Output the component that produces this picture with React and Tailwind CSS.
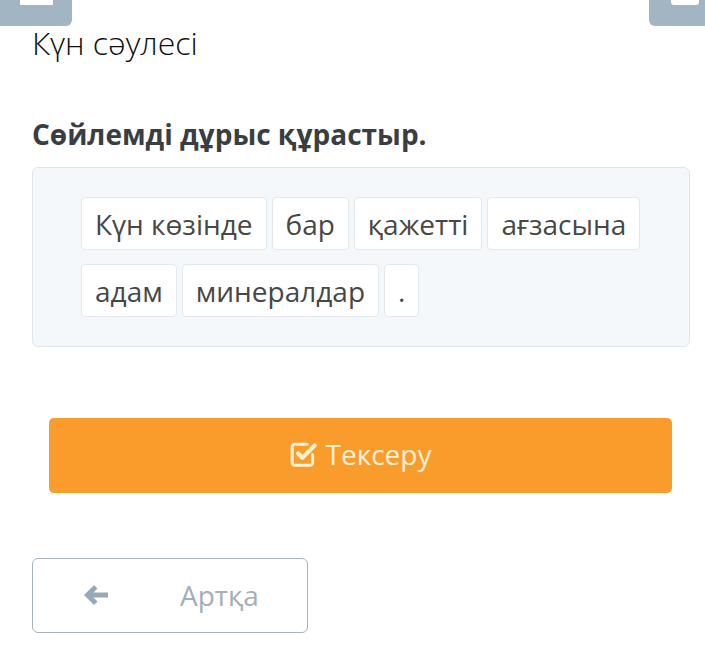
import { useState } from "react";

const words = [
    "Күн көзінде",
    "бар",
    "қажетті",
    "ағзасына",
    "адам",
    "минералдар",
    ".",
];

function CheckSquare() {
    return (
        <svg width="28" height="28" viewBox="0 0 26 26" fill="none">
            <path d="M21 13.5 V21 A2.5 2.5 0 0 1 18.5 23.5 H4.5 A2.5 2.5 0 0 1 2 21 V6.5 A2.5 2.5 0 0 1 4.5 4 H16" stroke="#fdf1d6" strokeWidth="2.8" strokeLinecap="round" />
            <path d="M7.5 12.5 L11.5 16.5 L23 5" stroke="#fdf1d6" strokeWidth="3.8" strokeLinecap="round" strokeLinejoin="round" />
        </svg>
    );
}

function ArrowLeft() {
    return (
        <svg width="28" height="24" viewBox="0 0 28 24">
            <path d="M12 2 L2 12 L12 22 L15.5 18.5 L11.5 14.5 H26 V9.5 H11.5 L15.5 5.5 Z" fill="#95a9b6" strokeLinejoin="round" />
        </svg>
    );
}

export default function App() {

    const [order] = useState(words);

    return (
        <div className="relative h-[661px] w-[705px] overflow-hidden bg-white font-['Open_Sans',sans-serif]">

            <div className="flex h-[26px] justify-between">
                <div className="relative h-[26px] w-[72px] rounded-br-[6px] bg-[#a2b5c3]">
                    <div className="absolute left-[20px] top-0 h-[5px] w-[33px] bg-white" />
                </div>
                <div className="relative h-[26px] w-[56px] rounded-bl-[6px] bg-[#a2b5c3]">
                    <div className="absolute left-[22px] top-0 h-[5px] w-[28px] rounded-b-[3px] bg-white" />
                </div>
            </div>

            <div className="px-[32px]">

                <h1 className="mt-[-3px] text-[32px] font-light leading-[40px] text-[#0f0f0f]">
                    Күн сәулесі
                </h1>

                <h2 className="mt-[53px] text-[28px] font-bold leading-[36px] text-[#393e43]">
                    Сөйлемді дұрыс құрастыр.
                </h2>

                <div className="mt-[15px] h-[180px] w-[658px] rounded-[6px] border border-[#dfe6eb] bg-[#f4f8fb] pl-[48px] pr-[40px] pt-[29px]">
                    <div className="flex flex-wrap gap-x-[5px] gap-y-[14px]">
                        {order.map((w, i) => (
                            <div
                                key={i}
                                className="flex h-[53px] items-center rounded-[4px] border border-[#e3e8ec] bg-white px-[13px] text-[28px] leading-none text-[#474747]"
                            >
                                {w}
                            </div>
                        ))}
                    </div>
                </div>

                <button className="ml-[17px] mt-[71px] flex h-[75px] w-[623px] items-center justify-center gap-[8px] rounded-[5px] bg-[#fa9c2c] pb-[4px] text-[28px] text-[#fdf1d6]">
                    <CheckSquare />
                    <span>Тексеру</span>
                </button>

                <button className="mt-[65px] flex h-[75px] w-[276px] items-center rounded-[6px] border border-[#a9b3ba] bg-white pb-[2px] pl-[49px] text-[28px] text-[#a3afb8]">
                    <ArrowLeft />
                    <span className="ml-[70px]">Артқа</span>
                </button>

            </div>
        </div>
    );
}
